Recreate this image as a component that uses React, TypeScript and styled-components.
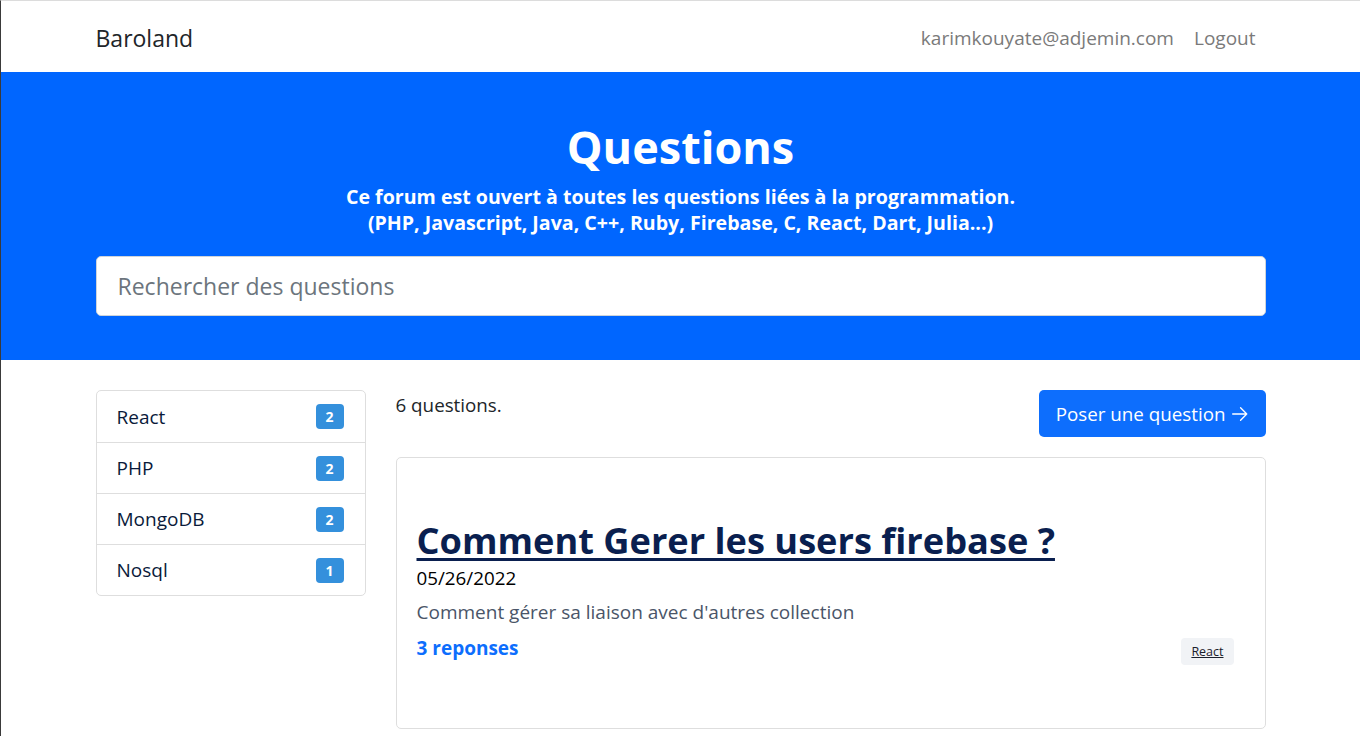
import React from "react";
import styled, { createGlobalStyle } from "styled-components";

const GlobalStyle = createGlobalStyle`
  * { box-sizing: border-box; }
  html, body { margin: 0; padding: 0; }
  body {
    font-family: "Open Sans", "Noto Sans", "Liberation Sans", sans-serif;
    color: #212529;
    background: #fff;
    font-size: 19px;
  }
`;

const Page = styled.div`
  min-height: 736px;
  border-left: 1px solid #3a3a3a;
  border-top: 1px solid #dcdcdc;
`;

const Container = styled.div`
  width: 1170px;
  margin: 0 auto;
`;

const NavBar = styled.nav`
  height: 71px;
  background: #fff;
`;

const NavInner = styled(Container)`
  height: 100%;
  display: flex;
  align-items: center;
  justify-content: space-between;
`;

const Brand = styled.a`
  font-size: 23px;
  color: #212529;
  text-decoration: none;
  margin-top: 2px;
`;

const NavLinks = styled.div`
  display: flex;
  gap: 20px;
  margin-top: 2px;
  padding-right: 10px;
`;

const NavLink = styled.a`
  font-size: 19px;
  color: #7a7a7a;
  text-decoration: none;
`;

const Hero = styled.header`
  background: #0066ff;
  color: #fff;
  padding: 44px 0 44px;
  text-align: center;
`;

const HeroTitle = styled.h1`
  margin: 0;
  font-size: 45px;
  font-weight: 700;
  line-height: 62px;
`;

const HeroText = styled.p`
  margin: 6px 0 20px;
  font-size: 19.6px;
  font-weight: 700;
  line-height: 26px;
`;

const Search = styled.input`
  display: block;
  width: 100%;
  height: 60px;
  border: 1px solid #ced4da;
  border-radius: 5px;
  padding: 0 21px;
  font-family: inherit;
  font-size: 23px;
  color: #212529;
  outline: none;
  &::placeholder { color: #6c757d; }
`;

const Main = styled(Container)`
  display: grid;
  grid-template-columns: 270px 1fr;
  gap: 30px;
  padding-top: 30px;
`;

const List = styled.ul`
  list-style: none;
  margin: 0;
  padding: 0;
  border: 1px solid #dedede;
  border-radius: 5px;
  align-self: start;
`;

const ListItem = styled.li`
  display: flex;
  align-items: center;
  justify-content: space-between;
  height: 51px;
  padding: 0 21px 0 20px;
  font-size: 19px;
  color: #0a1a3a;
  & + & { border-top: 1px solid #dedede; }
`;

const Badge = styled.span`
  display: inline-flex;
  align-items: center;
  justify-content: center;
  width: 28px;
  height: 25px;
  border-radius: 4px;
  background: #3490dc;
  color: #fff;
  font-size: 14px;
  font-weight: 700;
`;

const Content = styled.section`
  display: flex;
  flex-direction: column;
  gap: 20px;
`;

const TopRow = styled.div`
  display: flex;
  justify-content: space-between;
  align-items: flex-start;
`;

const Count = styled.p`
  margin: 2px 0 0;
  font-size: 18.8px;
  color: #212529;
`;

const Button = styled.button`
  display: inline-flex;
  align-items: center;
  gap: 5px;
  height: 47px;
  padding: 0 17px 0 17px;
  background: #0d6efd;
  color: #fff;
  border: none;
  border-radius: 5px;
  font-family: inherit;
  font-size: 18.8px;
`;

const Card = styled.article`
  border: 1px solid #dedede;
  border-radius: 5px;
  padding: 60px 20px 63px;
`;

const QTitle = styled.a`
  display: inline-block;
  font-size: 36.2px;
  font-weight: 700;
  color: #0a1f4f;
  line-height: 44px;
  text-decoration: underline;
  text-decoration-thickness: 3px;
  text-underline-offset: 4px;
`;

const QDate = styled.div`
  margin-top: 4px;
  font-size: 18.8px;
  color: #000;
  line-height: 24px;
`;

const QDesc = styled.p`
  margin: 9px 0 0;
  font-size: 19px;
  color: #4a5568;
  line-height: 26px;
`;

const QFooter = styled.div`
  display: flex;
  justify-content: space-between;
  align-items: center;
  margin-top: 5px;
  padding-right: 11px;
`;

const Replies = styled.a`
  font-size: 19px;
  font-weight: 700;
  color: #0d6efd;
  text-decoration: none;
`;

const Tag = styled.a`
  display: inline-block;
  padding: 5px 10px;
  background: #f1f3f6;
  border-radius: 4px;
  font-size: 12.5px;
  color: #1a202c;
  text-decoration: underline;
  margin-top: 8px;
`;

const tags = [
  { name: "React", count: 2 },
  { name: "PHP", count: 2 },
  { name: "MongoDB", count: 2 },
  { name: "Nosql", count: 1 },
];

export default function App() {
  return (
    <Page>
      <GlobalStyle />
      <NavBar>
        <NavInner>
          <Brand href="#">Baroland</Brand>
          <NavLinks>
            <NavLink href="#">karimkouyate@adjemin.com</NavLink>
            <NavLink href="#">Logout</NavLink>
          </NavLinks>
        </NavInner>
      </NavBar>
      <Hero>
        <Container>
          <HeroTitle>Questions</HeroTitle>
          <HeroText>
            Ce forum est ouvert à toutes les questions liées à la programmation.
            <br />
            (PHP, Javascript, Java, C++, Ruby, Firebase, C, React, Dart, Julia...)
          </HeroText>
          <Search placeholder="Rechercher des questions" />
        </Container>
      </Hero>
      <Main>
        <List>
          {tags.map((t) => (
            <ListItem key={t.name}>
              {t.name}
              <Badge>{t.count}</Badge>
            </ListItem>
          ))}
        </List>
        <Content>
          <TopRow>
            <Count>6 questions.</Count>
            <Button>
              Poser une question
              <svg width="18" height="18" viewBox="0 0 16 16" fill="none" stroke="currentColor" strokeWidth="1.2" strokeLinecap="round" strokeLinejoin="round">
                <path d="M1.5 8h12.5M8.5 2.5 14 8l-5.5 5.5" />
              </svg>
            </Button>
          </TopRow>
          <Card>
            <QTitle href="#">Comment Gerer les users firebase ?</QTitle>
            <QDate>05/26/2022</QDate>
            <QDesc>Comment gérer sa liaison avec d'autres collection</QDesc>
            <QFooter>
              <Replies href="#">3 reponses</Replies>
              <Tag href="#">React</Tag>
            </QFooter>
          </Card>
        </Content>
      </Main>
    </Page>
  );
}
